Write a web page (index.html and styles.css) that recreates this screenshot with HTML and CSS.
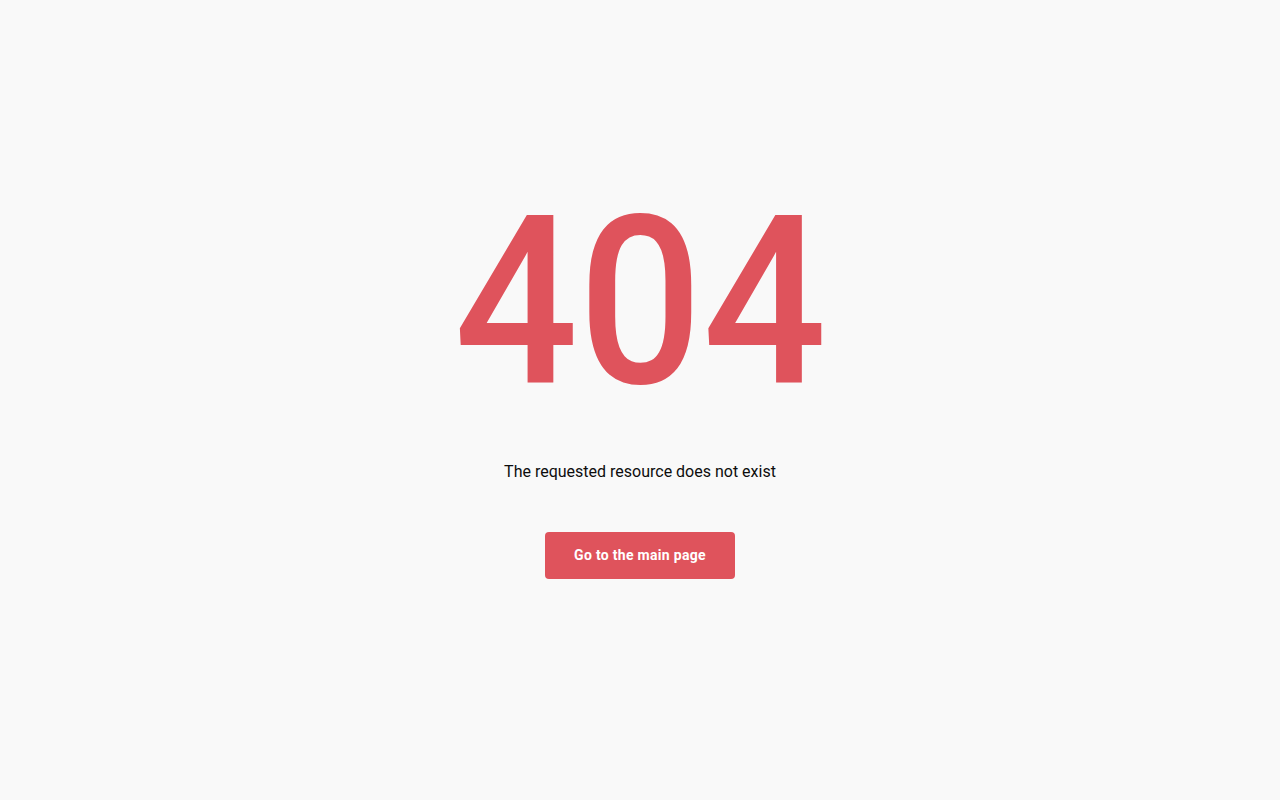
FILE: index.html
```html
<!DOCTYPE html>
<html lang="en">
<head>
<meta charset="utf-8">
<title>404</title>
<link rel="stylesheet" href="styles.css">
</head>
<body>
<main class="page">
  <h1 class="code">404</h1>
  <p class="message">The requested resource does not exist</p>
  <a class="button" href="#">Go to the main page</a>
</main>
</body>
</html>
```
FILE: styles.css
```css
html, body {
  margin: 0;
  padding: 0;
  background: #f9f9f9;
  font-family: Roboto, "Liberation Sans", sans-serif;
  color: #111;
}
.page {
  min-height: 800px;
  box-sizing: border-box;
  padding-top: 183px;
  display: flex;
  flex-direction: column;
  align-items: center;
}
.code {
  margin: 0;
  font-size: 235px;
  line-height: 240px;
  font-weight: 500;
  color: #df535c;
  transform: scaleX(0.93);
}
.message {
  margin: 37px 0 0;
  font-size: 16px;
  line-height: 24px;
  color: #0d0d0d;
}
.button {
  margin-top: 48px;
  display: flex;
  align-items: center;
  justify-content: center;
  width: 190px;
  height: 47px;
  padding-bottom: 2px;
  box-sizing: border-box;
  background: #df535c;
  color: #fff;
  border-radius: 4px;
  text-decoration: none;
  font-size: 14px;
  font-weight: 700;
  letter-spacing: 0.3px;
}
```
